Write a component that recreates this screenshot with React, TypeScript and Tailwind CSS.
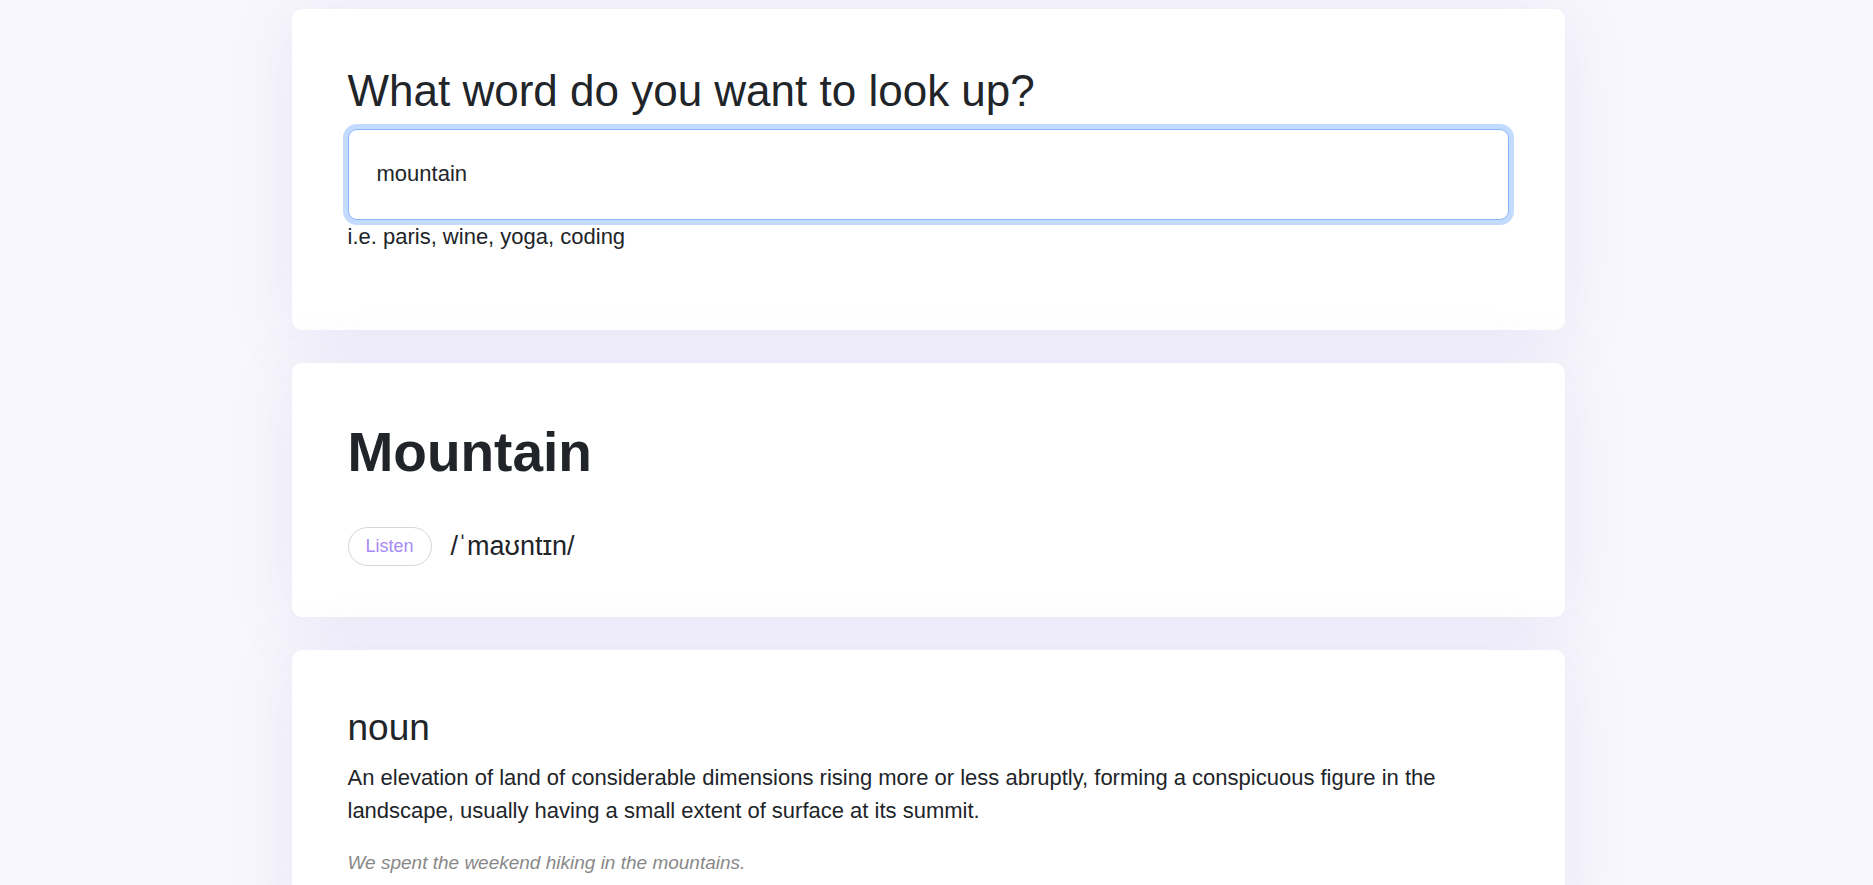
import React, { useState } from 'react';

const font = { fontFamily: '"Liberation Sans", Arial, sans-serif' };

export default function App() {
  const [query, setQuery] = useState('mountain');

  return (
    <div
      className="h-screen overflow-hidden bg-[#f8f7fd] pr-[17px] text-[#212529]"
      style={font}
    >
      <div className="mx-auto flex w-[1273px] flex-col gap-[33px] pt-[9px]">
        {/* SEARCH */}
        <section className="rounded-[10px] bg-white px-[56px] pt-[56px] pb-[77px] shadow-[0_8px_70px_rgba(104,88,190,0.11)]">
          <h1 className="mb-[11px] text-[44px] leading-[1.2] font-normal">
            What word do you want to look up?
          </h1>
          <input
            type="text"
            autoFocus
            value={query}
            onChange={(e) => setQuery(e.target.value)}
            className="block h-[91px] w-full rounded-[9px] border border-[#86b7fe] bg-white px-[28px] text-[22px] leading-[1.5] text-[#212529] shadow-[0_0_0_5px_rgba(13,110,253,0.25)] outline-none"
          />
          <div className="text-[22px] leading-[1.5]">i.e. paris, wine, yoga, coding</div>
        </section>

        {/* WORD */}
        <section className="rounded-[10px] bg-white px-[56px] pt-[56px] pb-[51px] shadow-[0_8px_70px_rgba(104,88,190,0.11)]">
          <h2 className="text-[55px] leading-[1.2] font-bold">Mountain</h2>
          <div className="mt-[42px] flex h-[39px] items-center gap-[19px]">
            <button className="h-[39px] rounded-full border border-[#d6d6d6] bg-white px-[17px] text-[18px] leading-none text-[#a68af5]">
              Listen
            </button>
            <span className="text-[27px] leading-[39px]">/ˈmaʊntɪn/</span>
          </div>
        </section>

        {/* MEANING */}
        <section className="rounded-[10px] bg-white px-[56px] pt-[56px] pb-[56px] shadow-[0_8px_70px_rgba(104,88,190,0.11)]">
          <h3 className="mb-[11px] text-[37px] leading-[1.2] font-normal">noun</h3>
          <p className="mb-[22px] text-[22px] leading-[1.5]">
            An elevation of land of considerable dimensions rising more or less abruptly, forming a
            conspicuous figure in the landscape, usually having a small extent of surface at its summit.
          </p>
          <p className="text-[19px] leading-[1.5] text-[#888888] italic">
            We spent the weekend hiking in the mountains.
          </p>
        </section>
      </div>
    </div>
  );
}
